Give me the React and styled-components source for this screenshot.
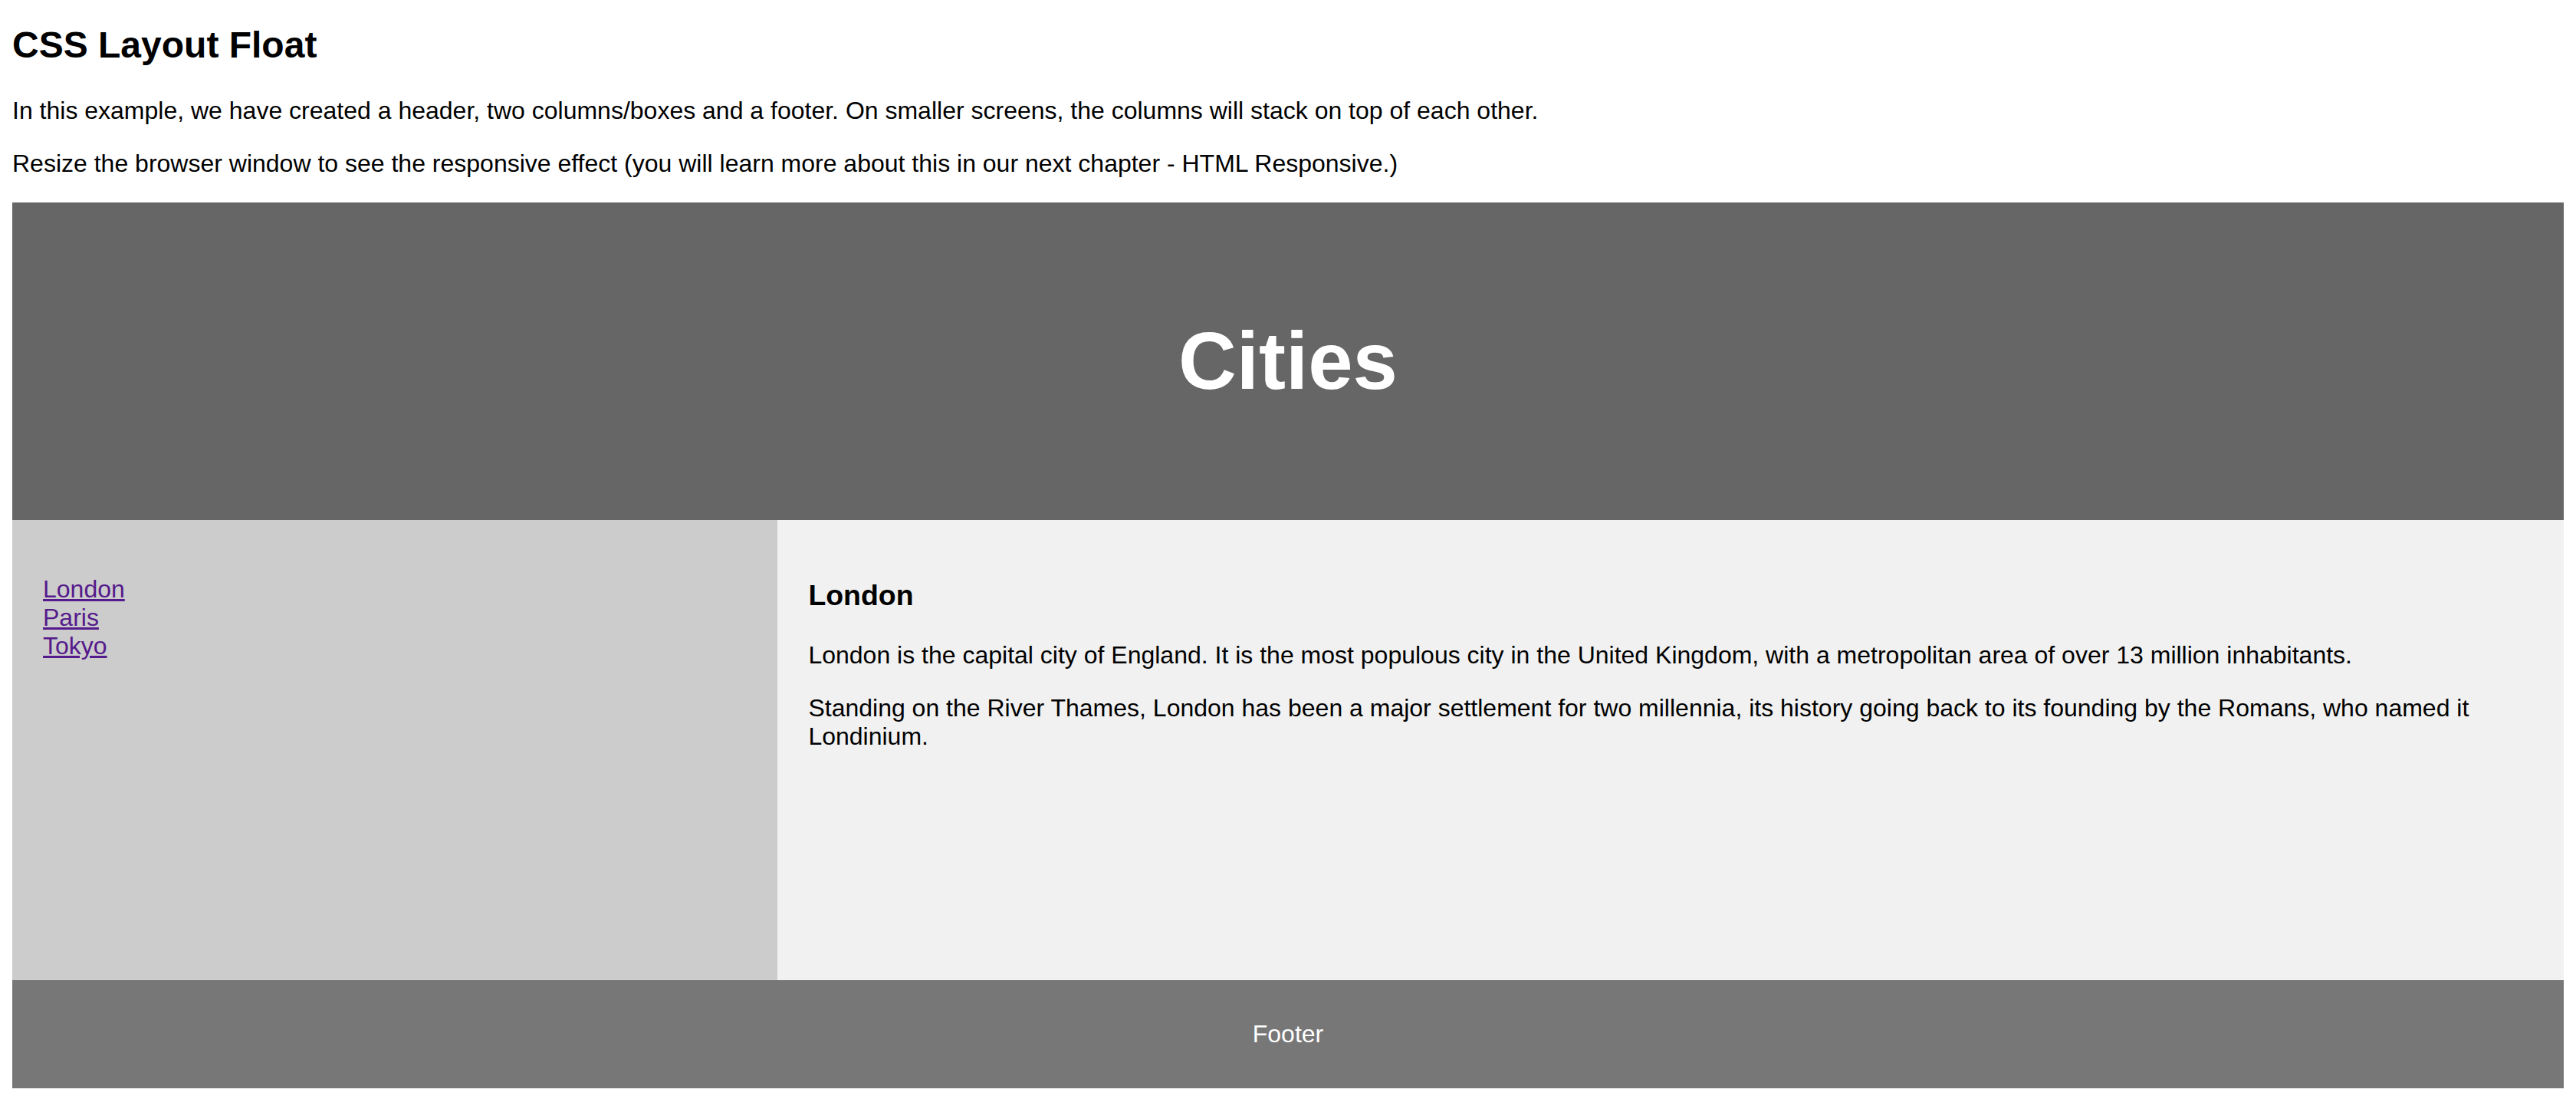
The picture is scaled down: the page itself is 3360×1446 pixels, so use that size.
import React from 'react';
import styled, { createGlobalStyle } from 'styled-components';

const GlobalStyle = createGlobalStyle`
  * {
    box-sizing: border-box;
  }

  body {
    margin: 16px;
    font-family: 'Liberation Sans', Arial, Helvetica, sans-serif;
    font-size: 32px;
    color: #000;
    background: #fff;
  }
`;

const PageTitle = styled.h2`
  font-size: 48px;
  font-weight: bold;
  margin: 15px 0 40px;
`;

const Intro = styled.p`
  margin: 32px 0;
`;

const Header = styled.header`
  background-color: #666;
  padding: 60px;
  text-align: center;
  font-size: 70px;
  color: white;
`;

const HeaderTitle = styled.h2`
  font-size: 105px;
  font-weight: bold;
  margin: 87px 0;
`;

const Section = styled.section`
  display: flex;
`;

const Nav = styled.nav`
  width: 30%;
  height: 600px;
  background: #ccc;
  padding: 40px;
`;

const NavList = styled.ul`
  list-style-type: none;
  padding: 0;
  margin: 32px 0;
`;

const NavLink = styled.a`
  color: #551a8b;
  text-decoration: underline;
`;

const Article = styled.article`
  width: 70%;
  height: 600px;
  padding: 40px;
  background-color: #f1f1f1;
`;

const ArticleTitle = styled.h1`
  font-size: 37.44px;
  font-weight: bold;
  margin: 37.44px 0;
`;

const ArticleText = styled.p`
  margin: 32px 0;
`;

const Footer = styled.footer`
  background-color: #777;
  padding: 20px;
  text-align: center;
  color: white;
`;

const FooterText = styled.p`
  margin: 32px 0;
`;

const cities = ['London', 'Paris', 'Tokyo'];

function App() {
  return (
    <>
      <GlobalStyle />
      <PageTitle>CSS Layout Float</PageTitle>
      <Intro>
        In this example, we have created a header, two columns/boxes and a footer. On smaller screens, the columns will stack on top of each other.
      </Intro>
      <Intro>
        Resize the browser window to see the responsive effect (you will learn more about this in our next chapter - HTML Responsive.)
      </Intro>

      <Header>
        <HeaderTitle>Cities</HeaderTitle>
      </Header>

      <Section>
        <Nav>
          <NavList>
            {cities.map((city) => (
              <li key={city}>
                <NavLink href='#'>{city}</NavLink>
              </li>
            ))}
          </NavList>
        </Nav>
        <Article>
          <ArticleTitle>London</ArticleTitle>
          <ArticleText>
            London is the capital city of England. It is the most populous city in the United Kingdom, with a metropolitan area of over 13 million inhabitants.
          </ArticleText>
          <ArticleText>
            Standing on the River Thames, London has been a major settlement for two millennia, its history going back to its founding by the Romans, who named it Londinium.
          </ArticleText>
        </Article>
      </Section>

      <Footer>
        <FooterText>Footer</FooterText>
      </Footer>
    </>
  );
}

export default App;
